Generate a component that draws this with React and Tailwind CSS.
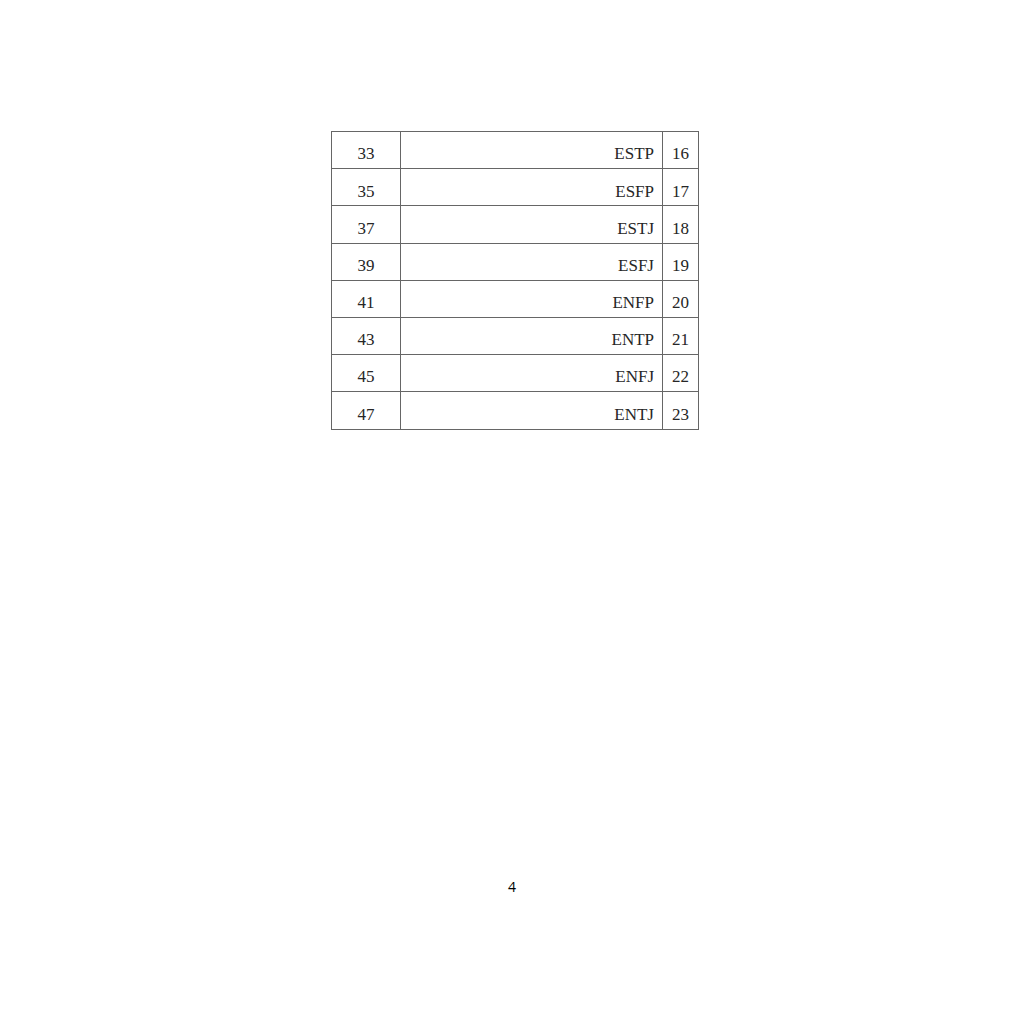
const rows = [
  ['33', 'ESTP', '16'],
  ['35', 'ESFP', '17'],
  ['37', 'ESTJ', '18'],
  ['39', 'ESFJ', '19'],
  ['41', 'ENFP', '20'],
  ['43', 'ENTP', '21'],
  ['45', 'ENFJ', '22'],
  ['47', 'ENTJ', '23'],
]

export default function App() {
  return (
    <div className="w-[1024px] h-[1024px] bg-white flex flex-col">
      <div className="pt-[131px] pl-[331px]">
        <table
          className="border-collapse text-[17px] text-[#262626]"
          style={{ fontFamily: '"Liberation Serif", serif' }}
        >
          <tbody>
            {rows.map(([a, b, c]) => (
              <tr key={a} className="h-[37.2px]">
                <td className="w-[69px] border border-[#666] text-center p-0 pt-[8px]">{a}</td>
                <td className="w-[262px] border border-[#666] text-right p-0 pt-[8px] pr-[8px]">{b}</td>
                <td className="w-[36px] border border-[#666] text-center p-0 pt-[8px]">{c}</td>
              </tr>
            ))}
          </tbody>
        </table>
      </div>
      <div
        className="mt-[446px] text-center text-[14px] text-black"
        style={{ fontFamily: '"Open Sans", sans-serif' }}
      >
        4
      </div>
    </div>
  )
}
